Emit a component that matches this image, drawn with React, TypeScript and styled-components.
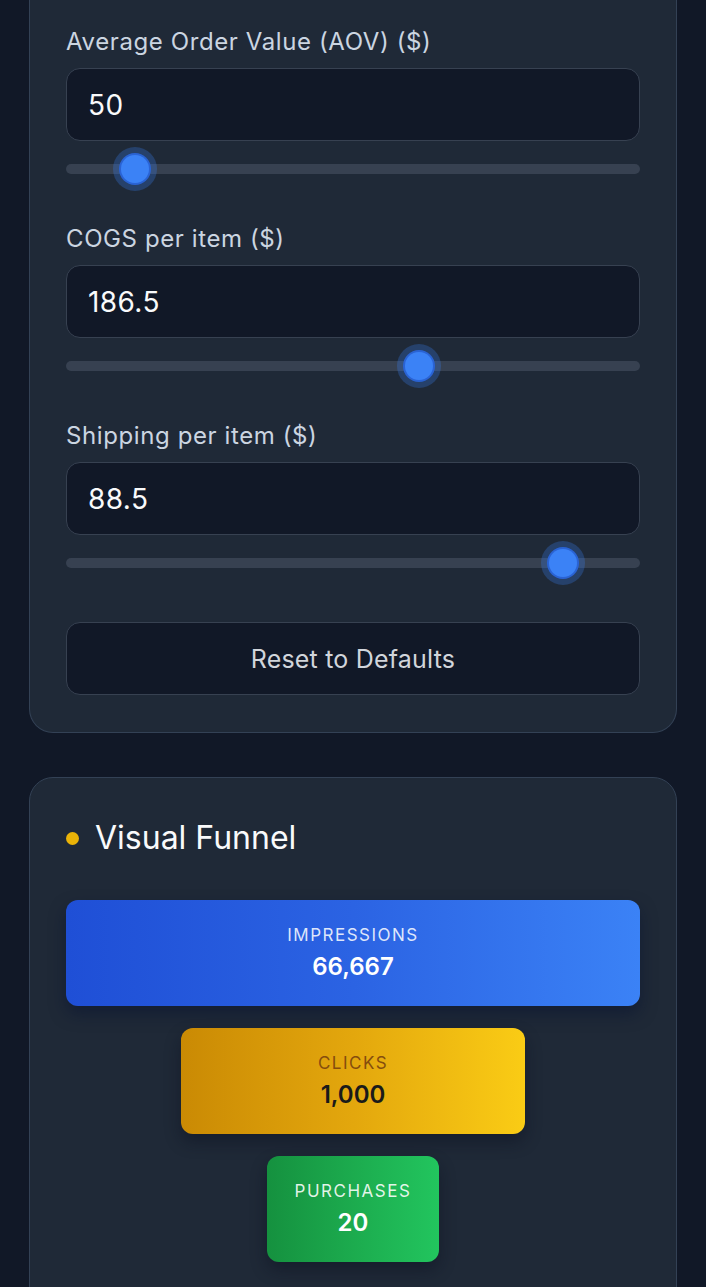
import * as React from 'react';
import styled, { createGlobalStyle } from 'styled-components';

const GlobalStyle = createGlobalStyle`
  html, body {
    margin: 0;
    padding: 0;
    background: #111827;
  }
  body {
    font-family: Inter, "Noto Sans", "Liberation Sans", sans-serif;
    color: #f3f4f6;
  }
  * {
    box-sizing: border-box;
  }
`;

interface IField {
  label: string;
  value: number;
  min: number;
  max: number;
  step: number;
}

interface IStage {
  label: string;
  value: number;
  width: number;
  tone: 'blue' | 'yellow' | 'green';
}

const defaults: IField[] = [
  { label: 'Average Order Value (AOV) ($)', value: 50, min: 0, max: 500, step: 1 },
  { label: 'COGS per item ($)', value: 186.5, min: 0, max: 300, step: 0.5 },
  { label: 'Shipping per item ($)', value: 88.5, min: 0, max: 100, step: 0.5 },
];

const stages: IStage[] = [
  { label: 'Impressions', value: 66667, width: 100, tone: 'blue' },
  { label: 'Clicks', value: 1000, width: 60, tone: 'yellow' },
  { label: 'Purchases', value: 20, width: 30, tone: 'green' },
];

const tones = {
  blue: {
    bg: 'linear-gradient(90deg, #1f4fd6 0%, #2b63e3 50%, #3b82f6 100%)',
    label: 'rgba(255, 255, 255, 0.85)',
    value: '#ffffff',
    shadow: 'rgba(10, 20, 50, 0.55)',
  },
  yellow: {
    bg: 'linear-gradient(90deg, #ca8a04 0%, #e3a70d 50%, #facc15 100%)',
    label: '#854d0e',
    value: '#1a1a1a',
    shadow: 'rgba(10, 15, 30, 0.45)',
  },
  green: {
    bg: 'linear-gradient(90deg, #15913f 0%, #1cab4e 50%, #22c55e 100%)',
    label: 'rgba(255, 255, 255, 0.88)',
    value: '#ffffff',
    shadow: 'rgba(10, 15, 30, 0.45)',
  },
};

const SliderField: React.FC<{
  field: IField;
  value: number;
  onChange: (v: number) => void;
}> = ({ field, value, onChange }) => (
  <FieldGroup>
    <FieldLabel>{field.label}</FieldLabel>
    <NumberInput
      type="number"
      value={value}
      step={field.step}
      onChange={(e) => onChange(Number(e.target.value))}
    />
    <Range
      type="range"
      min={field.min}
      max={field.max}
      step={field.step}
      value={value}
      onChange={(e) => onChange(Number(e.target.value))}
    />
  </FieldGroup>
);

export const App: React.FC = () => {
  const [values, setValues] = React.useState(defaults.map((f) => f.value));

  const update = (i: number) => (v: number) =>
    setValues((prev) => prev.map((p, j) => (j === i ? v : p)));

  return (
    <Page>
      <GlobalStyle />
      <InputsCard>
        {defaults.map((field, i) => (
          <SliderField key={field.label} field={field} value={values[i]} onChange={update(i)} />
        ))}
        <ResetButton onClick={() => setValues(defaults.map((f) => f.value))}>
          Reset to Defaults
        </ResetButton>
      </InputsCard>

      <FunnelCard>
        <CardTitle>
          <Dot />
          Visual Funnel
        </CardTitle>
        <Funnel>
          {stages.map((s) => (
            <Stage key={s.label} tone={s.tone} style={{ width: `${s.width}%` }}>
              <StageLabel tone={s.tone}>{s.label}</StageLabel>
              <StageValue tone={s.tone}>{s.value.toLocaleString('en-US')}</StageValue>
            </Stage>
          ))}
        </Funnel>
      </FunnelCard>
    </Page>
  );
};

export default App;

const Page = styled.div`
  display: flex;
  flex-direction: column;
  gap: 44px;
  padding: 0 29px 40px;
`;

const Card = styled.section`
  background: #1f2937;
  border: 1px solid #334155;
  border-radius: 24px;
  padding: 36px;
`;

const InputsCard = styled(Card)`
  border-top: none;
  border-top-left-radius: 0;
  border-top-right-radius: 0;
  padding-top: 25px;
  padding-bottom: 37px;
`;

const FunnelCard = styled(Card)`
  padding-bottom: 60px;
`;

const FieldGroup = styled.div`
  display: flex;
  flex-direction: column;
  margin-bottom: 39px;
`;

const FieldLabel = styled.label`
  font-size: 24px;
  line-height: 34px;
  letter-spacing: 0.6px;
  color: #cbd5e1;
  margin-bottom: 9px;
`;

const NumberInput = styled.input`
  width: 100%;
  height: 73px;
  background: #111827;
  border: 1px solid #374151;
  border-radius: 14px;
  padding: 0 21px;
  font-family: inherit;
  font-size: 28px;
  letter-spacing: 0.4px;
  color: #f9fafb;
  outline: none;
  margin-bottom: 14px;
  -moz-appearance: textfield;

  &::-webkit-outer-spin-button,
  &::-webkit-inner-spin-button {
    -webkit-appearance: none;
    margin: 0;
  }
`;

const Range = styled.input`
  -webkit-appearance: none;
  appearance: none;
  display: block;
  width: 100%;
  height: 28px;
  margin: 0;
  background: transparent;
  outline: none;

  &::-webkit-slider-runnable-track {
    height: 10px;
    border-radius: 5px;
    background: #374151;
  }

  &::-webkit-slider-thumb {
    -webkit-appearance: none;
    width: 28px;
    height: 28px;
    margin-top: -9px;
    border-radius: 50%;
    background: #3b82f6;
    box-shadow: 0 0 0 2px #2a63d4, 0 0 0 8px rgba(59, 130, 246, 0.28);
  }
`;

const ResetButton = styled.button`
  width: 100%;
  height: 73px;
  margin-top: 6px;
  background: #111827;
  border: 1px solid #374151;
  border-radius: 14px;
  font-family: inherit;
  font-size: 25px;
  letter-spacing: 0.2px;
  color: #d1d5db;
  cursor: pointer;
`;

const CardTitle = styled.h2`
  display: flex;
  align-items: center;
  gap: 16px;
  margin: 0 0 38px;
  font-size: 32px;
  line-height: 48px;
  font-weight: 400;
  color: #f9fafb;
`;

const Dot = styled.span`
  width: 13px;
  height: 13px;
  border-radius: 50%;
  background: #eab308;
  flex-shrink: 0;
`;

const Funnel = styled.div`
  display: flex;
  flex-direction: column;
  align-items: center;
  gap: 22px;
`;

const Stage = styled.div<{ tone: IStage['tone'] }>`
  display: flex;
  flex-direction: column;
  align-items: center;
  justify-content: center;
  gap: 2px;
  height: 106px;
  border-radius: 12px;
  background: ${(p) => tones[p.tone].bg};
  box-shadow: 0 8px 16px ${(p) => tones[p.tone].shadow};
`;

const StageLabel = styled.span<{ tone: IStage['tone'] }>`
  font-size: 17px;
  line-height: 25px;
  letter-spacing: 1.5px;
  text-transform: uppercase;
  color: ${(p) => tones[p.tone].label};
`;

const StageValue = styled.span<{ tone: IStage['tone'] }>`
  font-size: 24px;
  line-height: 33px;
  font-weight: 600;
  color: ${(p) => tones[p.tone].value};
`;
